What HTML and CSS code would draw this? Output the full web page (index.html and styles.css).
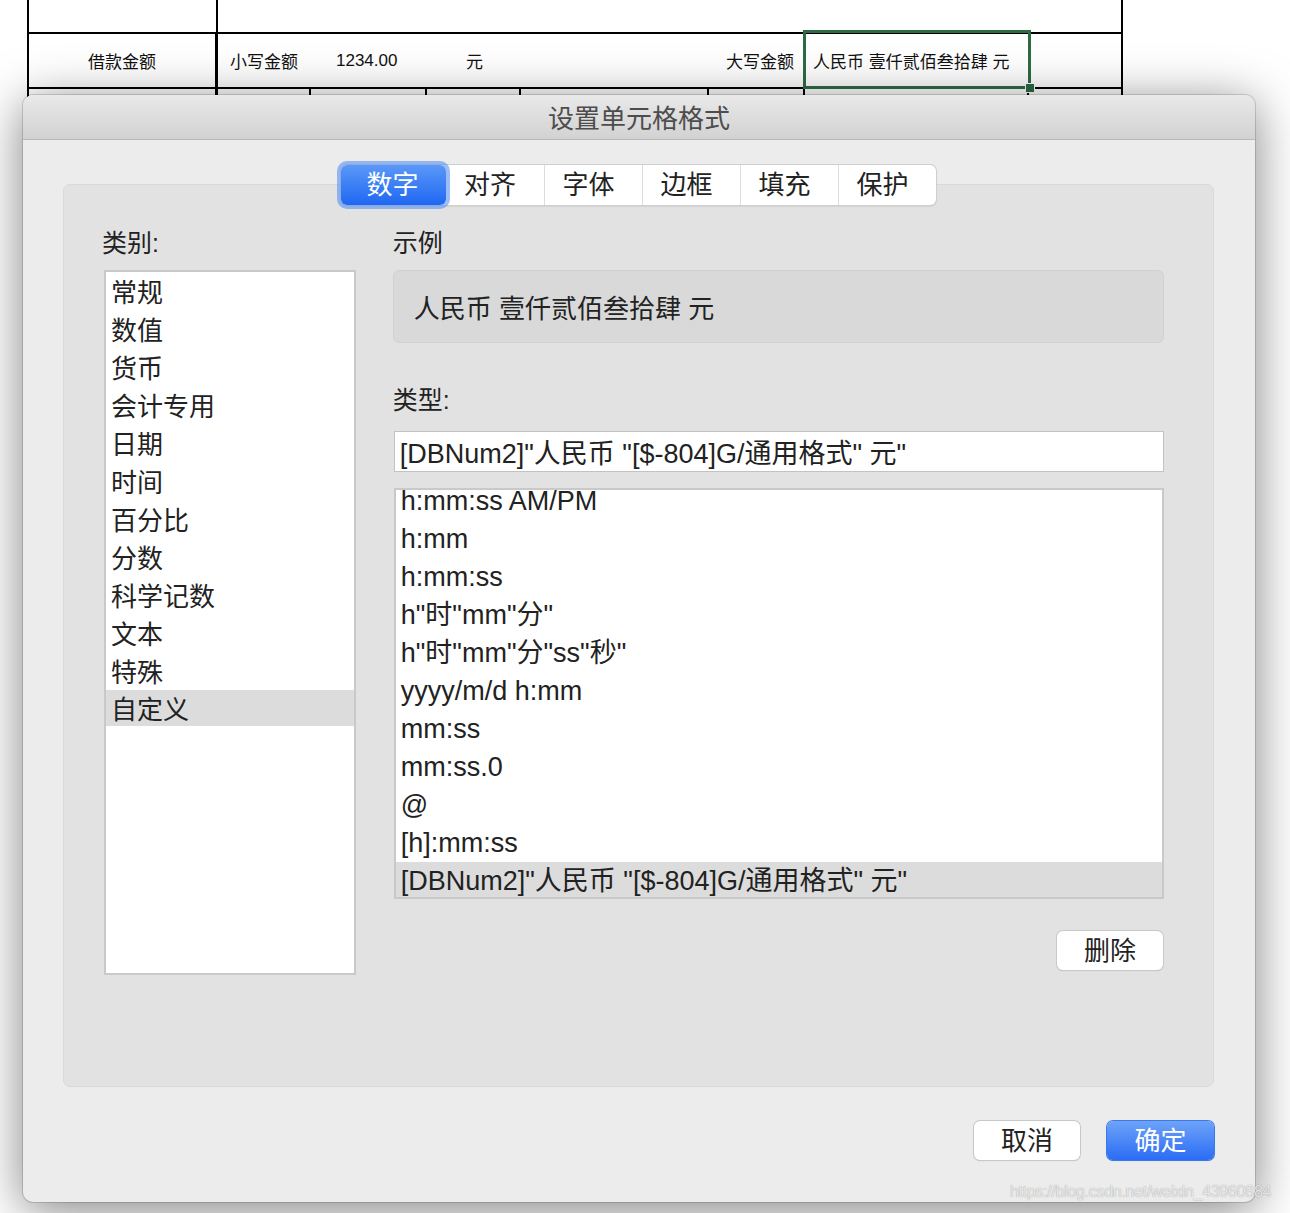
FILE: index.html
```html
<!DOCTYPE html>
<html lang="zh-CN">
<head>
<meta charset="utf-8">
<title>设置单元格格式</title>
<link rel="stylesheet" href="styles.css">
</head>
<body>
<div class="page">
  <div class="sheet">
    <div class="cell c-a"></div>
    <div class="cell c-b"></div>

    <div class="cell thick center">借款金额</div>
    <div class="cell m pad12">小写金额</div>
    <div class="cell m pad25">1234.00</div>
    <div class="cell m pad39">元</div>
    <div class="cell m"></div>
    <div class="cell m right">大写金额</div>
    <div class="cell m pad10">人民币 壹仟贰佰叁拾肆 元</div>
    <div class="cell"></div>

    <div class="cell thick"></div>
    <div class="cell"></div>
    <div class="cell"></div>
    <div class="cell"></div>
    <div class="cell"></div>
    <div class="cell"></div>
    <div class="cell"></div>
    <div class="cell"></div>

    <div class="selection"><span class="handle"></span></div>
  </div>

  <div class="dialog">
    <div class="titlebar">设置单元格格式</div>
    <div class="body">
      <div class="tabs">
        <div class="tab active">数字</div>
        <div class="tab">对齐</div>
        <div class="tab">字体</div>
        <div class="tab">边框</div>
        <div class="tab">填充</div>
        <div class="tab">保护</div>
      </div>
      <div class="panel">
        <div class="col-left">
          <div class="label">类别:</div>
          <div class="catlist">
            <div class="item">常规</div>
            <div class="item">数值</div>
            <div class="item">货币</div>
            <div class="item">会计专用</div>
            <div class="item">日期</div>
            <div class="item">时间</div>
            <div class="item">百分比</div>
            <div class="item">分数</div>
            <div class="item">科学记数</div>
            <div class="item">文本</div>
            <div class="item">特殊</div>
            <div class="item sel">自定义</div>
          </div>
        </div>
        <div class="col-right">
          <div class="label">示例</div>
          <div class="sample">人民币 壹仟贰佰叁拾肆 元</div>
          <div class="label type-label">类型:</div>
          <div class="input">[DBNum2]"人民币 "[$-804]G/通用格式" 元"</div>
          <div class="typelist">
            <div class="typeinner">
              <div class="titem first">h:mm:ss AM/PM</div>
              <div class="titem">h:mm</div>
              <div class="titem">h:mm:ss</div>
              <div class="titem">h"时"mm"分"</div>
              <div class="titem">h"时"mm"分"ss"秒"</div>
              <div class="titem">yyyy/m/d h:mm</div>
              <div class="titem">mm:ss</div>
              <div class="titem">mm:ss.0</div>
              <div class="titem">@</div>
              <div class="titem">[h]:mm:ss</div>
              <div class="titem sel">[DBNum2]"人民币 "[$-804]G/通用格式" 元"</div>
            </div>
          </div>
          <div class="del-row"><div class="btn">删除</div></div>
        </div>
      </div>
      <div class="footer">
        <div class="btn">取消</div>
        <div class="btn primary">确定</div>
      </div>
    </div>
  </div>

  <div class="watermark">https://blog.csdn.net/weixin_43960884</div>
</div>
</body>
</html>
```

FILE: styles.css
```css
* { box-sizing: border-box; }
html, body { margin: 0; padding: 0; }
body {
  width: 1290px;
  height: 1213px;
  overflow: hidden;
  background: #ffffff;
  font-family: "Liberation Sans", "Noto Sans CJK SC", sans-serif;
  color: #222;
}
.page {
  position: relative;
  width: 1290px;
  height: 1213px;
}

/* spreadsheet */
.sheet {
  position: relative;
  margin-left: 27px;
  display: grid;
  grid-template-columns: 189px 93px 116px 94px 188px 96px 224px 94px;
  grid-template-rows: 34px 55px 40px;
  width: 1096px;
  border-left: 2px solid #000;
  font-size: 17px;
  color: #111;
}
.cell {
  border-right: 2px solid #000;
  border-bottom: 2px solid #000;
  display: flex;
  align-items: center;
  white-space: nowrap;
}
.c-a { grid-column: 1; }
.c-b { grid-column: 2 / 9; }
.thick { border-right-width: 3px; }
.m { border-right: none; }
.center { justify-content: center; }
.right { justify-content: flex-end; padding-right: 11px; }
.pad12 { padding-left: 12px; }
.pad25 { padding-left: 25px; }
.pad39 { padding-left: 39px; }
.pad10 { padding-left: 8px; }
.selection {
  position: absolute;
  z-index: 1;
  left: 774px;
  top: 30px;
  width: 228px;
  height: 59px;
  border: 3px solid #2e6b44;
}
.handle {
  position: absolute;
  right: -7px;
  bottom: -7px;
  width: 10px;
  height: 10px;
  background: #2e6b44;
  border: 1px solid #fff;
}

/* dialog */
.dialog {
  position: absolute;
  z-index: 3;
  left: 23px;
  top: 95px;
  width: 1232px;
  height: 1107px;
  border-radius: 10px;
  background: #ececec;
  box-shadow: 0 8px 50px rgba(0,0,0,0.5), 0 0 0 1px rgba(0,0,0,0.14);
  overflow: hidden;
  font-family: "Liberation Sans", "Noto Sans CJK SC", sans-serif;
}
.titlebar {
  height: 45px;
  background: linear-gradient(#e9e9e9, #d2d2d2);
  border-bottom: 1px solid #b9b9b9;
  text-align: center;
  font-size: 26px;
  line-height: 48px;
  color: #4d4d4d;
}
.body {
  padding: 25px 41px 42px 40px;
}
.tabs {
  position: relative;
  z-index: 2;
  display: flex;
  width: fit-content;
  margin: 0 auto;
  height: 40px;
  background: #fff;
  border-radius: 6px;
  box-shadow: 0 0 0 1px #cfcfcf, 0 1px 2px rgba(0,0,0,0.2);
}
.tab {
  width: 98px;
  height: 40px;
  font-size: 26px;
  line-height: 41px;
  text-align: center;
  padding-right: 10px;
  color: #222;
  border-left: 1px solid #dcdcdc;
}
.tab.active {
  width: 105px;
  padding-right: 2px;
  border-left: none;
  color: #fff;
  border-radius: 6px;
  background: linear-gradient(#5b98f8, #1f67f2);
  box-shadow: 0 0 0 4px rgba(90,145,240,0.6);
}
.tab.active + .tab { border-left: none; }

.panel {
  margin-top: -21px;
  height: 903px;
  background: #e2e2e2;
  border: 1px solid #d9d9d9;
  border-radius: 7px;
  display: flex;
  gap: 37px;
  padding: 43px 49px 0 40px;
}
.label {
  font-size: 25px;
  line-height: 30px;
  height: 30px;
  color: #222;
  margin-bottom: 12px;
}
.col-left { width: 252px; }
.col-left .label { margin-left: -2px; }
.col-right { width: 772px; }
.catlist {
  height: 705px;
  background: #fff;
  border: 2px solid #c9c9c9;
  padding-top: 2px;
  overflow: hidden;
}
.item {
  height: 38px;
  line-height: 38px;
  padding-left: 5px;
  font-size: 26px;
  color: #222;
}
.item.sel { background: #dcdcdc; height: 36px; margin-top: -2px; padding-top: 1px; }
.titem.sel { background: #dcdcdc; }

.sample {
  height: 73px;
  background: #d9d9d9;
  border: 1px solid #d1d1d1;
  border-radius: 6px;
  padding-left: 20px;
  font-size: 26px;
  line-height: 76px;
  color: #222;
}
.type-label { margin-top: 42px; margin-bottom: 16px; }
.input {
  margin-left: 1px;
  width: 770px;
  height: 41px;
  background: #fff;
  border: 1px solid #c2c2c2;
  padding-left: 5px;
  font-size: 27px;
  line-height: 44px;
  white-space: nowrap;
  color: #222;
}
.typelist {
  margin-top: 16px;
  margin-left: 1px;
  width: 770px;
  height: 411px;
  background: #fff;
  border: 2px solid #c9c9c9;
  overflow: hidden;
}
.typeinner { margin-top: -4px; }
.titem {
  height: 38px;
  line-height: 39px;
  padding-left: 5px;
  font-size: 27px;
  white-space: nowrap;
  color: #222;
}
.titem.first {
  height: 34px;
  line-height: 31px;
}
.del-row {
  display: flex;
  justify-content: flex-end;
  margin-top: 32px;
  padding-right: 1px;
}
.btn {
  width: 106px;
  height: 39px;
  background: #fff;
  border-radius: 6px;
  box-shadow: 0 0 0 1px #c8c8c8, 0 1px 1px rgba(0,0,0,0.2);
  font-size: 26px;
  line-height: 41px;
  text-align: center;
  color: #222;
}
.footer {
  display: flex;
  justify-content: flex-end;
  gap: 27px;
  margin-top: 34px;
}
.btn.primary {
  width: 107px;
  color: #fff;
  background: linear-gradient(#6ea3f9, #2a6cf4);
  box-shadow: 0 0 0 1px #3a78ee, 0 1px 1px rgba(0,0,0,0.2);
}

.watermark {
  position: absolute;
  left: 1010px;
  top: 1183px;
  font-family: "Liberation Sans", sans-serif;
  font-size: 16px;
  letter-spacing: -0.3px;
  color: rgba(255,255,255,0.8);
  text-shadow: 0 0 1px rgba(0,0,0,0.45);
  z-index: 5;
  white-space: nowrap;
}
```
